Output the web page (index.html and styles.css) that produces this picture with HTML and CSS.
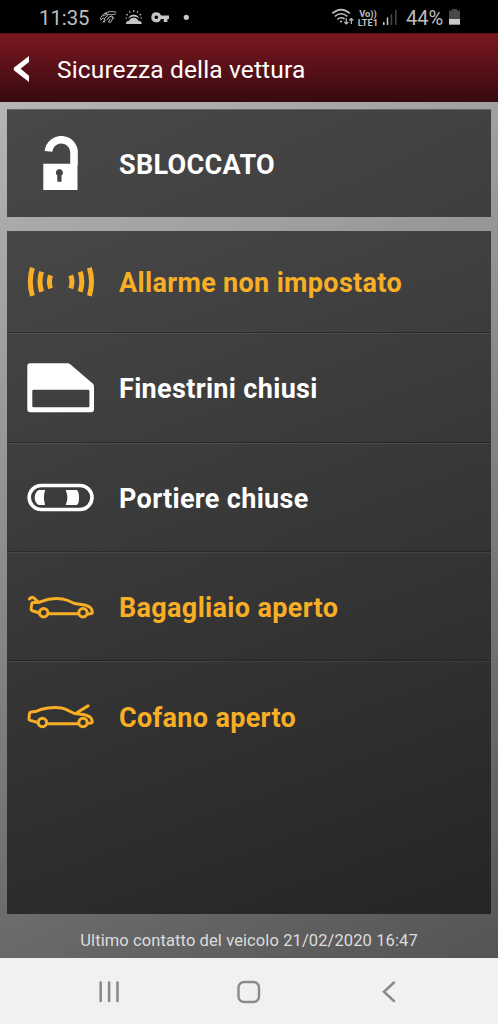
FILE: index.html
```html
<!DOCTYPE html>
<html lang="it">
<head>
<meta charset="utf-8">
<title>Sicurezza della vettura</title>
<link rel="stylesheet" href="styles.css">
</head>
<body>
<div class="screen">
  <div class="status">
    <span class="clock">11:35</span>
    <svg class="notifications" width="94" height="20" viewBox="98 8 94 20">
      <g fill="none" stroke="#b0b0b0" stroke-width="1" stroke-linecap="round">
        <path d="M116 12c-4-.8-8-.6-11 1.200-2.600 1.600-4.600 3.800-4.600 6M105 13.500l6 1.300 4.500-.8M103 16l3-1.500 2 1-3 2.500M101 20l2-2 2 1-2 3M107 20l2-3 3-1 .5 3-2 3.500-2-.5 1.500-3M112.500 16.500l1.500 2M105 20l-1 2.500"/>
      </g>
      <g fill="#c6c6c6">
        <path d="M126 24q0-3.200 3.200-3.200.8-3 4.400-3 3.500 0 4.800 3 3.300 0 3.300 3.200z"/>
        <path d="M128.300 18.600a5.600 5 0 0 1 10.900-.1q-2.400-2.200-5.500-2-3.100.2-5.400 2.100z"/>
      </g>
      <path d="M133.700 10v2M129.300 11.200l1 1.600M138.100 11.200l-1 1.600M126.200 14.200l1.600 1M141.200 14.200l-1.600 1M125.500 18h1.500M140.500 18h1.500" stroke="#c6c6c6" stroke-width="1.100"/>
      <path d="M156.300 12.300a5 5 0 0 1 4.700 3.100h8v3.600h-1.600v3h-3.700v-3H161a5 5 0 1 1-4.700-6.700zm0 3.200a1.800 1.800 0 1 0 0 3.600 1.800 1.800 0 0 0 0-3.600z" fill="#c6c6c6" fill-rule="evenodd"/>
      <circle cx="186.300" cy="17.300" r="2.600" fill="#c6c6c6"/>
    </svg>
    <div class="system">
      <svg class="wifi" width="24" height="20" viewBox="331 8 24 20">
        <g fill="none" stroke="#bebebe" stroke-width="1.500">
          <path d="M332.300 13.400q8.800-7.600 17.600 0M334.800 16.400q6.300-5.200 12.600 0M337.400 19.300q3.700-2.800 7.200-.2"/>
          <path d="M346.300 18.300v5.500M344.300 22l2 2 2-2M351.300 24v-5.500M349.300 20.500l2-2 2 2" stroke-width="1.200"/>
        </g>
        <circle cx="341" cy="21.500" r="1.100" fill="#bebebe"/>
      </svg>
      <div class="lte"><span>Vo))</span><span>LTE1</span></div>
      <svg class="signal" width="16" height="17" viewBox="382 9 16 17">
        <path d="M383.800 22v3M387.500 17.500V25" stroke="#c8c8c8" stroke-width="1.500"/>
        <path d="M391.500 14v11M395.800 10v15" stroke="#484848" stroke-width="1.500"/>
      </svg>
      <span class="percent">44%</span>
      <svg class="battery" width="11" height="16" viewBox="0 0 11 16">
        <path d="M3 0h5v1.500h3V10H0V1.500h3z" fill="#474747"/>
        <path d="M0 10h11v5.700H0z" fill="#c9c9c9"/>
      </svg>
    </div>
  </div>

  <div class="header">
    <svg class="back" width="17" height="28" viewBox="0 0 17 28">
      <path d="M16 1v6L7.600 13.800 16 20.800V27L.8 15.300v-2.600z" fill="#fff"/>
    </svg>
    <h1 class="title">Sicurezza della vettura</h1>
  </div>

  <div class="content">
    <div class="card lock">
      <div class="icon">
        <svg width="68" height="56" viewBox="26 136 68 56">
          <path d="M48.500 151.300a12.700 12.700 0 0 1 25.500 2.500v11" fill="none" stroke="#fff" stroke-width="7.600"/>
          <path d="M43.300 163.800h34.200V190H43.300z" fill="#fff"/>
          <path d="M59.400 169a3.600 3.600 0 0 1 2.100 6.500v6.300h-4.200v-6.300a3.600 3.600 0 0 1 2.100-6.500z" fill="#454545"/>
        </svg>
      </div>
      <span class="label">SBLOCCATO</span>
    </div>

    <div class="card list">
      <div class="row alert">
        <div class="icon">
          <svg width="68" height="32" viewBox="26 265.500 68 32">
            <g fill="none" stroke="currentColor" stroke-width="5">
              <path d="M32.400 267.200q-4.200 14 0 28.200M41.600 271.200q-3.300 10 0 20M50.600 274.800q-2.400 6.500 0 13"/>
              <path d="M89.400 267.200q4.200 14 0 28.200M80.200 271.200q3.300 10 0 20M70.800 274.800q2.400 6.500 0 13"/>
            </g>
          </svg>
        </div>
        <span class="label">Allarme non impostato</span>
      </div>
      <div class="row">
        <div class="icon">
          <svg width="68" height="50" viewBox="26 362.700 68 50">
            <path d="M30 363h37.500q1.500 0 2.700 1l22.500 19.300q1.300 1.100 1.300 2.700v23q0 3-3 3H30.300q-3 0-3-3v-43q0-3 2.700-3zm3.500 26.500q-1.200 0-1.200 1.200v15.100q0 1.200 1.200 1.200h54.700q1.200 0 1.200-1.200v-15.100q0-1.200-1.200-1.200z" fill="#fff" fill-rule="evenodd"/>
          </svg>
        </div>
        <span class="label">Finestrini chiusi</span>
      </div>
      <div class="row">
        <div class="icon">
          <svg width="68" height="30" viewBox="26 482.800 68 30">
            <rect x="29.200" y="485.300" width="62.800" height="24" rx="12" fill="none" stroke="#fff" stroke-width="3.600"/>
            <path d="M38.500 489.700h6.600q-2.300 7.600 0 15.200h-6.600q-3.800-2.600-3.800-7.600t3.800-7.600zM65.700 489.700h10.500q2.800 0 2.800 7.600t-2.800 7.600H65.700q3.300-7.600 0-15.200z" fill="#fff"/>
          </svg>
        </div>
        <span class="label">Portiere chiuse</span>
      </div>
      <div class="row alert">
        <div class="icon">
          <svg width="68" height="26" viewBox="26 593.500 68 26">
            <g fill="none" stroke="currentColor" stroke-width="3" stroke-linejoin="round" stroke-linecap="round">
              <path d="M29.300 598.400l2-1.300q1.200-.7 2.500.3l4.500 4.200M38 612l-5.700-1.800q-1.500-.6-1.200-2.300l.7-4.600q.2-1.400 1.600-1.400h3.600q2.500 0 4.600-1.100 6.800-2.900 14.500-2.900 7 0 11.800 2.100l6.600 3 8.500 1.200q6.500 1.200 8.400 4.100l.9 3.200q.2 1.400-1.200 1.600l-2.700.3M49.500 613.300h27.800"/>
              <circle cx="43.700" cy="612.200" r="4.200"/><circle cx="83" cy="612.200" r="4.200"/>
            </g>
          </svg>
        </div>
        <span class="label">Bagagliaio aperto</span>
      </div>
      <div class="row alert">
        <div class="icon">
          <svg width="68" height="27" viewBox="26 702.800 68 27">
            <g fill="none" stroke="currentColor" stroke-width="3" stroke-linejoin="round" stroke-linecap="round">
              <path d="M37 722l-6.800-1.800q-1.300-.5-1.200-1.900l.4-4.800q.2-1.500 1.700-1.700l5.600-.8 5-2q6-1.600 13-1.600 7.300 0 11.700 2.100l8 3.800 8.500 1.100q6.500 1.200 8.400 4l.9 2.700q.2 1.500-1.100 1.700l-3.300.2M76 713l12-7.300M48 723.500h29.300"/>
              <circle cx="42.400" cy="722.300" r="4.200"/><circle cx="83" cy="722.300" r="4.200"/>
            </g>
          </svg>
        </div>
        <span class="label">Cofano aperto</span>
      </div>
    </div>

    <p class="contact">Ultimo contatto del veicolo 21/02/2020 16:47</p>
  </div>

  <div class="navbar">
    <svg width="22" height="22" viewBox="0 0 22 22"><path d="M2.700 1.500v18.500M11.100 1.500v18.500M19.500 1.500v18.500" stroke="#8a8a8a" stroke-width="2.600" stroke-linecap="round"/></svg>
    <svg class="home" width="24" height="24" viewBox="0 0 24 24"><rect x="1.500" y="2" width="20.500" height="20" rx="5.500" fill="none" stroke="#8a8a8a" stroke-width="2.400"/></svg>
    <svg width="14" height="22" viewBox="0 0 14 22"><path d="M12 1.500L2 10.800 12 20" fill="none" stroke="#8a8a8a" stroke-width="2.500" stroke-linecap="round"/></svg>
  </div>
</div>
</body>
</html>
```
FILE: styles.css
```css
* { box-sizing: border-box; }
body { margin: 0; font-family: Roboto, sans-serif; }
.screen { width: 498px; height: 1024px; display: flex; flex-direction: column; overflow: hidden; }
.screen svg { display: block; flex: none; }

.status { height: 33px; flex: none; background: #000; color: #bebebe; display: flex; align-items: flex-start; padding: 8px 38px 0 39px; }
.clock { width: 59px; font-size: 20.300px; line-height: 20px; }
.system { display: flex; margin-left: auto; align-items: flex-start; }
.lte { width: 24px; margin: 1px 0 0 1px; display: flex; flex-direction: column; align-items: center; font-size: 9.300px; line-height: 9px; font-weight: 700; }
.signal { margin: 1px 0 0 2px; }
.percent { width: 38px; margin-left: 8px; font-size: 20px; line-height: 20px; white-space: nowrap; }
.battery { margin: 1px 0 0 5px; }

.header { height: 69px; flex: none; display: flex; align-items: center; padding: 4px 0 0 13px; background: linear-gradient(#7b1720, #370a10); border-top: 1px solid #681019; color: #fff; }
.back { margin-right: 27px; margin-top: -3px; }
.title { margin: 0; font-size: 24.500px; line-height: 32px; font-weight: 400; letter-spacing: .14px; }

.content { height: 856px; flex: none; display: flex; flex-direction: column; padding: 7px 7px 0; background: linear-gradient(155deg, #b5b5b5, #a0a0a0 22%, #545454); }
.card { background: linear-gradient(155deg, #484848, #3e3e3e); color: #fff; }
.lock { height: 108px; display: flex; align-items: center; padding-left: 19px; border-top: 1px solid #666; }
.list { height: 683px; margin-top: 14px; background: linear-gradient(160deg, #474747, #252525); }
.row { height: 109px; display: flex; align-items: center; padding-left: 19px; border-top: 1px solid rgba(255, 255, 255, .07); border-bottom: 1px solid rgba(0, 0, 0, .25); }
.row:first-child { height: 102px; border-top: 0; }
.row:nth-child(2) { height: 110px; }
.row:last-child { border-bottom: 0; height: 110px; }
.alert { color: #f8af26; }
.icon { width: 68px; margin-right: 25px; }
.label { padding-top: 2px; font-size: 27px; line-height: 34px; font-weight: 700; letter-spacing: .33px; white-space: nowrap; }
.contact { margin: 15px 0 0; text-align: center; color: #dcdcdc; font-size: 16.500px; line-height: 24px; letter-spacing: .1px; white-space: nowrap; }

.navbar { flex: 1; background: #f1f1f1; display: flex; align-items: center; justify-content: space-between; padding: 2px 102px 0 98px; }
.home { margin-right: 4px; }
```
